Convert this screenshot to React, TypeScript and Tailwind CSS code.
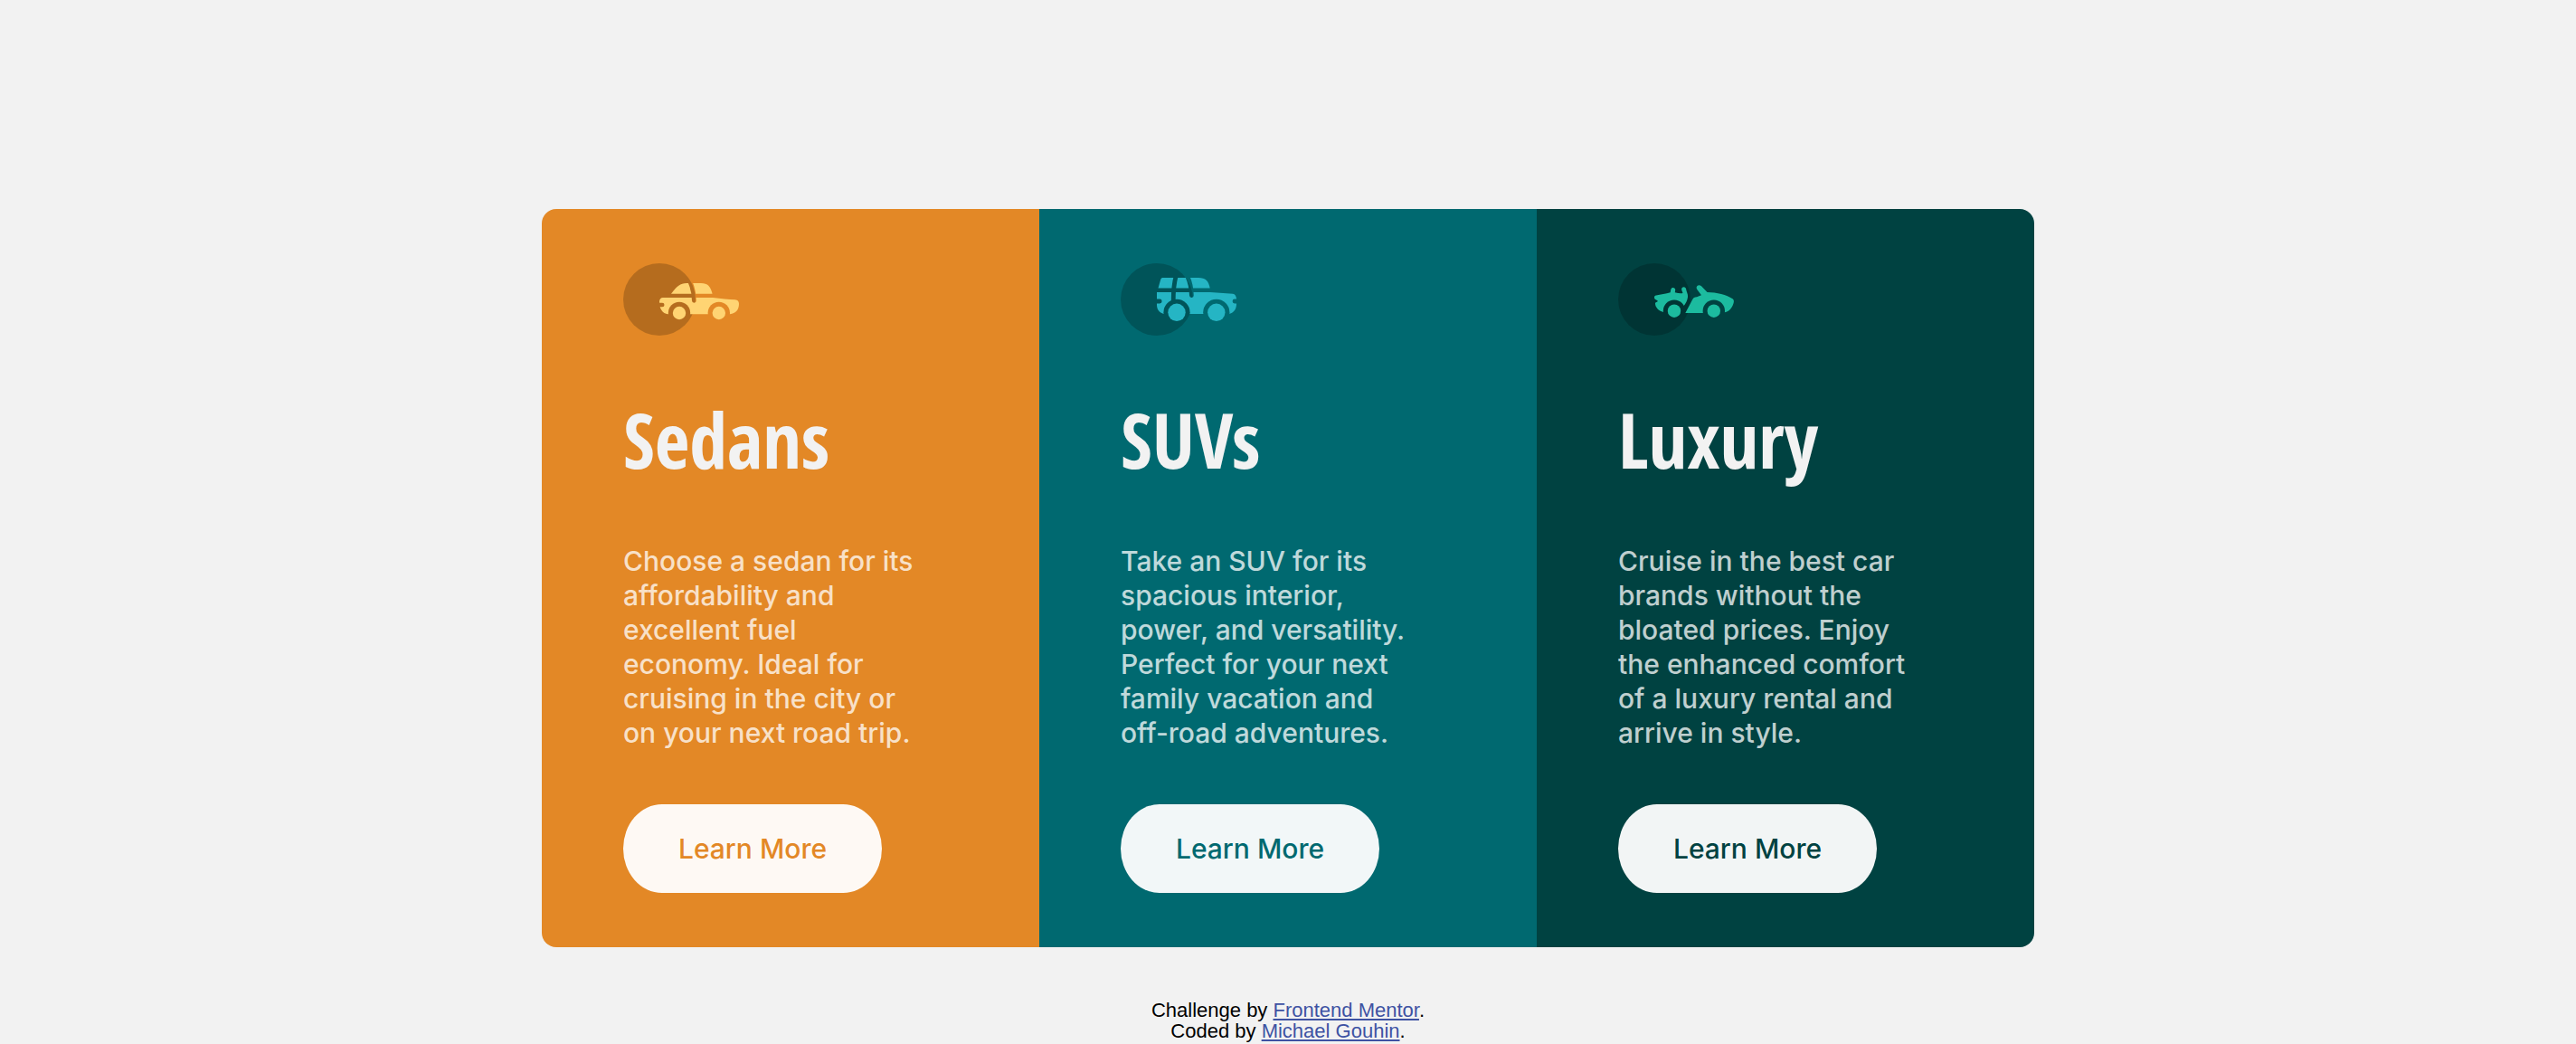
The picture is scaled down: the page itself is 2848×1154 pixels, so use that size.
import type { ReactNode } from 'react';

function IconFrame({ children }: { children: ReactNode }) {
  return (
    <svg className="block h-20 w-32" viewBox="0 0 128 80" aria-hidden="true">
      <circle cx="40" cy="40" r="40" fill="#000" fillOpacity="0.2" />
      {children}
    </svg>
  );
}

function SedanIcon() {
  return (
    <IconFrame>
      <mask id="sedan-cut" maskUnits="userSpaceOnUse" x="0" y="0" width="128" height="80">
        <rect width="128" height="80" fill="#fff" />
        <circle cx="62" cy="55" r="12.2" fill="#000" />
        <circle cx="105.8" cy="55" r="12.2" fill="#000" />
        <path d="M38 46H43.2" stroke="#000" strokeWidth="4.6" strokeLinecap="round" />
        <path d="M74 20.5C76.8 27 78.2 34 78.4 41.3" fill="none" stroke="#000" strokeWidth="4.8" strokeLinecap="round" />
      </mask>
      <g fill="#ffd473">
        <g mask="url(#sedan-cut)">
          <path d="M53 33.8C59.5 25.3 63 22 70 22H86C93.5 22 96.5 25.5 98.6 33.8Z" />
          <path d="M44 38H99C108 39 117 40 123.5 40.3C127 40.6 128 42.5 128 45C128 51.5 124.5 55.3 118 56.3H49.5C43.5 55.5 40 50.5 40 42.5C40 40 41.5 38 44 38Z" />
        </g>
        <circle cx="62" cy="55" r="7.2" />
        <circle cx="105.8" cy="55" r="7.2" />
      </g>
    </IconFrame>
  );
}

function SuvIcon() {
  return (
    <IconFrame>
      <mask id="suv-cut" maskUnits="userSpaceOnUse" x="0" y="0" width="128" height="80">
        <rect width="128" height="80" fill="#fff" />
        <circle cx="62" cy="54.3" r="14.6" fill="#000" />
        <circle cx="105.8" cy="54.3" r="14.6" fill="#000" />
        <path d="M38 42H43.2M130 42H126" stroke="#000" strokeWidth="4.8" strokeLinecap="round" />
        <path d="M61.2 14C59.5 20 58.2 27 58.2 42" fill="none" stroke="#000" strokeWidth="4.8" />
        <path d="M73.8 14.5C76.8 21 78.2 28 78.4 35.5" fill="none" stroke="#000" strokeWidth="4.8" strokeLinecap="round" />
      </mask>
      <g fill="#25b5c4">
        <g mask="url(#suv-cut)">
          <path d="M41.5 27.5L44.3 17.5Q44.8 16 46.3 16H86C94 16 97 19.5 98.7 27.5Z" />
          <path d="M40 32H99L124 33.7C126.5 34 127.5 36 128 39V45C128 50.5 125 55 119.5 56H47.5C42.5 54.5 40 51 40 46Z" />
        </g>
        <circle cx="62" cy="54.3" r="9.7" />
        <circle cx="105.8" cy="54.3" r="9.7" />
      </g>
    </IconFrame>
  );
}

function LuxuryIcon() {
  return (
    <IconFrame>
      <mask id="luxury-cut" maskUnits="userSpaceOnUse" x="0" y="0" width="128" height="80">
        <rect width="128" height="80" fill="#fff" />
        <circle cx="62" cy="52.7" r="12.2" fill="#000" />
        <circle cx="105.8" cy="52.7" r="12.2" fill="#000" />
      </mask>
      <g fill="#1cbb9f">
        <g mask="url(#luxury-cut)">
          <path d="M42 35.5C47 34.8 53 33.5 57.7 32.3L58.3 29C58.8 26 63.4 26.4 63.2 29.5L62.8 32.3C66 33 69 33.5 71.5 33L70.2 29.5C69.5 25.5 75 25 75.2 29C75.5 32 77.5 34 77 37.5C76.5 41 75 44 72.7 47L62 54H50C44.5 52.5 41 48.5 41 44.5C41 42.5 43.7 43.5 43.7 41.8C43.7 40.5 40 40.5 40 38C40 36.5 40.5 35.8 42 35.5Z" />
          <path d="M74.3 55L82 40.5C83 38 84.500 37.500 87 37.200L92 35.200L87.500 29.300C84.800 26 88.800 22.300 92 25.300L98.500 32C109 32 120 35 126.500 39.200C128 40.200 128.200 41.800 127.600 44C126 49.500 123 53 118 54.300L108 55Z" />
        </g>
        <circle cx="62" cy="52.7" r="7.2" />
        <circle cx="105.8" cy="52.7" r="7.2" />
      </g>
    </IconFrame>
  );
}

const cards = [
  {
    title: 'Sedans',
    text: 'Choose a sedan for its affordability and excellent fuel economy. Ideal for cruising in the city or on your next road trip.',
    Icon: SedanIcon,
    panel: 'bg-[#e38826]',
    label: 'text-[#e38826]',
  },
  {
    title: 'SUVs',
    text: 'Take an SUV for its spacious interior, power, and versatility. Perfect for your next family vacation and off-road adventures.',
    Icon: SuvIcon,
    panel: 'bg-[#006970]',
    label: 'text-[#006970]',
  },
  {
    title: 'Luxury',
    text: 'Cruise in the best car brands without the bloated prices. Enjoy the enhanced comfort of a luxury rental and arrive in style.',
    Icon: LuxuryIcon,
    panel: 'bg-[#004241]',
    label: 'text-[#004241]',
  },
];

export default function App() {
  return (
    <div className="flex min-h-screen flex-col items-center gap-[58px] bg-[#f2f2f2] px-6 pt-[231px]">
      <main className="grid w-full max-w-[1650px] grid-cols-1 overflow-hidden rounded-2xl font-['Inter',sans-serif] text-[30px] leading-[38px] font-medium lg:grid-cols-3">
        {cards.map(({ title, text, Icon, panel, label }) => (
          <section key={title} className={`flex flex-col items-start gap-[60px] px-[90px] py-[60px] ${panel}`}>
            <Icon />
            <h2 className="font-['Open_Sans_Condensed','Roboto_Condensed',sans-serif] text-[84px] leading-[110px] font-bold text-[#f2f2f2]">
              {title}
            </h2>
            <p className="pr-10 text-white/75">{text}</p>
            <button type="button" className={`min-w-[286px] rounded-[15%/50%] bg-white/95 py-[30px] ${label}`}>
              Learn More
            </button>
          </section>
        ))}
      </main>
      <footer className="text-center font-['Liberation_Sans',Arial,sans-serif] text-[22px] leading-[23px] text-black">
        <p>
          Challenge by <a href="#frontend-mentor" className="text-[#3e52a3] underline">Frontend Mentor</a>.
        </p>
        <p>
          Coded by <a href="#michael-gouhin" className="text-[#3e52a3] underline">Michael Gouhin</a>.
        </p>
      </footer>
    </div>
  );
}
